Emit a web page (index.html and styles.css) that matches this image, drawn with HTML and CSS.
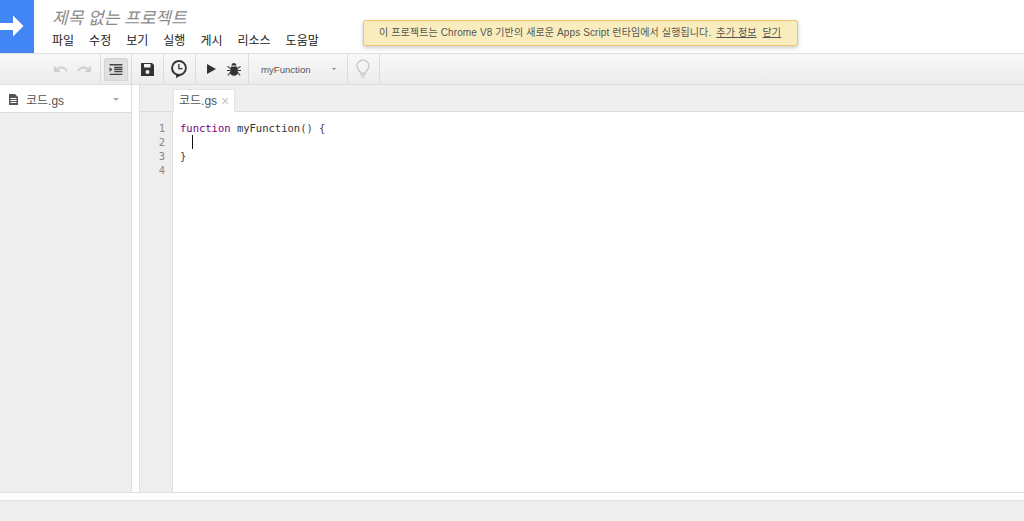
FILE: index.html
```html
<!DOCTYPE html>
<html lang="ko">
<head>
<meta charset="utf-8">
<title>제목 없는 프로젝트</title>
<link rel="stylesheet" href="styles.css">
</head>
<body>
<div class="app">
  <header class="header">
    <div class="logo">
      <svg width="34" height="53" viewBox="0 0 34 53"><path d="M0 23h13v-7.500l10.500 10.500-10.500 10.500v-6.500H0z" fill="#fff"/></svg>
    </div>
    <div class="titles">
      <div class="title">제목 없는 프로젝트</div>
      <nav class="menu">
        <span>파일</span><span>수정</span><span>보기</span><span>실행</span><span>게시</span><span>리소스</span><span>도움말</span>
      </nav>
    </div>
    <div class="notice">
      <span class="notice-text">이 프로젝트는 Chrome V8 기반의 새로운 Apps Script 런타임에서 실행됩니다.</span>
      <a class="notice-link">추가 정보</a>
      <a class="notice-link">닫기</a>
    </div>
  </header>

  <div class="toolbar">
    <div class="tb-group tb-undo">
      <svg class="ic-undo" width="14" height="9" viewBox="0 0 16 10"><path d="M0 1.500v7.500h7.500L4.800 6.400C6 5.400 7.300 5 8.500 5c2.300 0 4.300 1.300 5.300 3.500l1.900-.7C14.500 4.800 11.700 2.800 8.500 2.800c-1.900 0-3.600.7-5.200 1.900z" fill="#cfcfcf"/></svg>
      <svg class="ic-undo" width="14" height="9" viewBox="0 0 16 10"><path d="M16 1.500v7.500H8.500l2.700-2.600C10 5.400 8.700 5 7.500 5 5.200 5 3.200 6.300 2.200 8.500L.3 7.800C1.500 4.800 4.300 2.800 7.500 2.800c1.900 0 3.600.7 5.200 1.900z" fill="#cfcfcf"/></svg>
    </div>
    <div class="tb-group tb-indent">
      <button class="tb-active">
        <svg width="14" height="11" viewBox="0 0 14 12"><path d="M0 0h14v1.500H0zM5 3h9v1.500H5zM5 5.300h9v1.500H5zM5 7.600h9v1.500H5zM0 10.500h14V12H0zM0 3.300l3 2.700-3 2.700z" fill="#444"/></svg>
      </button>
    </div>
    <div class="tb-group tb-save">
      <svg width="13" height="13" viewBox="0 0 13 13"><path fill-rule="evenodd" d="M0 0h11l2 2v11H0zM3 1v3.500h6.500V1zM6.500 7a2 2 0 1 0 0 4 2 2 0 0 0 0-4z" fill="#333"/></svg>
    </div>
    <div class="tb-group tb-clock">
      <svg width="16" height="18" viewBox="0 0 16 18"><path fill-rule="evenodd" d="M8 0a8 8 0 0 1 1 15.900L5 18v-2.700A8 8 0 0 1 8 0zm0 2a6 6 0 1 0 0 12A6 6 0 0 0 8 2zM7.200 4h1.300v4h3v1.300H7.200z" fill="#333"/></svg>
    </div>
    <div class="tb-group tb-run">
      <svg width="9" height="10" viewBox="0 0 9 10"><path d="M0 0l9 5-9 5z" fill="#333"/></svg>
      <svg width="14" height="14" viewBox="0 0 14 14"><path d="M4.500 3.500a2.500 2.500 0 0 1 5 0zM4 4.500h6l.8 2v3.500a3.800 3.800 0 0 1-7.600 0V6.500zM0 4.500l1 -.6 2.200 2-.5.800zM14 4.500l-1-.6-2.200 2 .5.800zM0 8h3v1H0zM11 8h3v1h-3zM.500 13l2.500-3 .7.700-2.500 3zM13.500 13L11 10l-.7.700 2.500 3z" fill="#333"/></svg>
    </div>
    <div class="tb-group tb-select">
      <span class="fn-name">myFunction</span>
      <span class="caret"></span>
    </div>
    <div class="tb-group tb-bulb">
      <svg width="14" height="20" viewBox="0 0 15 20"><path d="M5 14.500C4.500 12 1 10.500 1 7a6.500 6.500 0 0 1 13 0c0 3.500-3.500 5-4 7.500z" fill="none" stroke="#c4c4c4" stroke-width="1.300"/><path d="M5 15.500h5V17H5zM6 18h3v1.300H6z" fill="#c4c4c4"/></svg>
    </div>
  </div>

  <main class="workspace">
    <aside class="sidebar">
      <div class="file-row">
        <svg width="9" height="11" viewBox="0 0 9 11"><path fill-rule="evenodd" d="M0 0h6l3 3v8H0zM1.500 4v1h6V4zM1.500 6v1h6V6zM1.500 8v1h6V8z" fill="#555"/></svg>
        <span class="file-name">코드.gs</span>
        <span class="caret caret-light"></span>
      </div>
    </aside>
    <section class="editor-pane">
      <div class="tabs">
        <div class="tab"><span>코드.gs</span><span class="tab-x">×</span></div>
      </div>
      <div class="editor">
        <div class="gutter"><div>1</div><div>2</div><div>3</div><div>4</div></div>
        <div class="code">
          <div><span class="kw">function</span> <span class="def">myFunction</span>() {</div>
          <div class="cursor-line"><span class="cursor"></span></div>
          <div>}</div>
          <div>&nbsp;</div>
        </div>
      </div>
    </section>
  </main>
  <footer class="status"></footer>
</div>
</body>
</html>
```
FILE: styles.css
```css
* { box-sizing: border-box; }
html, body { margin: 0; height: 100%; overflow: hidden; background: #fff; }
body { font-family: "Liberation Sans", "Noto Sans CJK KR", sans-serif; color: #333; }
.app { display: flex; flex-direction: column; height: 521px; }

.header { display: flex; height: 53px; position: relative; flex: none; }
.logo { width: 34px; background: #4285f4; flex: none; }
.logo svg { display: block; }
.titles { padding: 9px 0 0 18px; }
.title { font-size: 17px; line-height: 20px; font-style: italic; color: #8a8a8a; }
.menu { display: flex; gap: 15px; margin-top: 3px; font-size: 12px; line-height: 18px; color: #222; }
.notice { position: absolute; left: 363px; top: 20px; width: 435px; height: 26px; background: #f9edbe; border: 1px solid #f0c36d; border-radius: 2px; box-shadow: 0 2px 4px rgba(0,0,0,.2); font-size: 10px; line-height: 24px; color: #555; padding-left: 15px; white-space: nowrap; display: flex; gap: 5px; letter-spacing: .12px; }
.notice-link { text-decoration: underline; color: #555; }
.notice-link + .notice-link { margin-left: 1px; }

.toolbar { display: flex; height: 32px; flex: none; border-top: 1px solid #e0e0e0; border-bottom: 1px solid #e0e0e0; background: linear-gradient(#f8f8f8, #ececec); }
.tb-group { display: flex; align-items: center; border-right: 1px solid #dcdcdc; flex: none; height: 100%; }
.tb-undo { width: 101px; justify-content: flex-end; gap: 9px; padding: 0 9px 2px 0; }
.tb-indent { width: 31px; justify-content: center; }
.tb-active { width: 24px; height: 23px; padding: 0; display: flex; align-items: center; justify-content: center; background: #e0e0e0; border: 1px solid #d4d4d4; border-radius: 2px; }
.tb-save { width: 32px; justify-content: center; padding-right: 1px; }
.tb-clock { width: 32px; justify-content: center; padding-right: 1px; }
.tb-run { width: 53px; gap: 11px; padding-left: 11px; }
.tb-select { width: 99px; padding-left: 12px; font-size: 9.6px; color: #555; }
.fn-name { flex: 1; }
.caret { width: 0; height: 0; border: 2.5px solid transparent; border-top-color: #888; border-bottom: 0; margin-right: 11px; }
.tb-bulb { width: 32px; justify-content: center; padding-right: 1px; }

.workspace { flex: none; height: 408px; display: flex; border-bottom: 1px solid #e0e0e0; }
.sidebar { width: 132px; flex: none; background: #eee; border-right: 1px solid #e0e0e0; }
.file-row { height: 28px; background: #fff; border-bottom: 1px solid #ddd; display: flex; align-items: center; padding: 1px 0 0 9px; font-size: 12px; color: #555; }
.file-name { flex: 1; margin-left: 8px; }
.caret-light { border-top-color: #aaa; margin-right: 12px; border-width: 3px; border-bottom: 0; }
.editor-pane { flex: 1; margin-left: 7px; display: flex; flex-direction: column; border-left: 1px solid #e0e0e0; }
.tabs { height: 27px; background: #eee; padding-left: 33px; display: flex; flex: none; border-bottom: 1px solid #ddd; }
.tab { width: 62px; height: 23px; background: #fff; border: 1px solid #e4e4e4; border-bottom: 0; padding: 2px 0 0 5px; font-size: 12px; line-height: 18px; display: flex; gap: 4px; margin-top: 4px; color: #555; }
.tab-x { color: #c4c4c4; font-size: 14px; }
.editor { flex: 1; display: flex; }
.gutter { width: 33px; background: #eee; border-right: 1px solid #ddd; text-align: right; padding: 9px 7px 0 0; font-family: "DejaVu Sans Mono", monospace; font-size: 10.500px; line-height: 14px; color: #888; }
.code { padding: 9px 0 0 7px; font-family: "DejaVu Sans Mono", monospace; font-size: 10.500px; line-height: 14px; color: #444; }
.kw { color: #708; }
.def { color: #333; }
.cursor-line { position: relative; height: 14px; }
.cursor { position: absolute; left: 12px; top: 0; width: 1px; height: 14px; background: #111; }
.status { flex: 1; margin-top: 7px; background: #eee; border-top: 1px solid #e0e0e0; }
```
